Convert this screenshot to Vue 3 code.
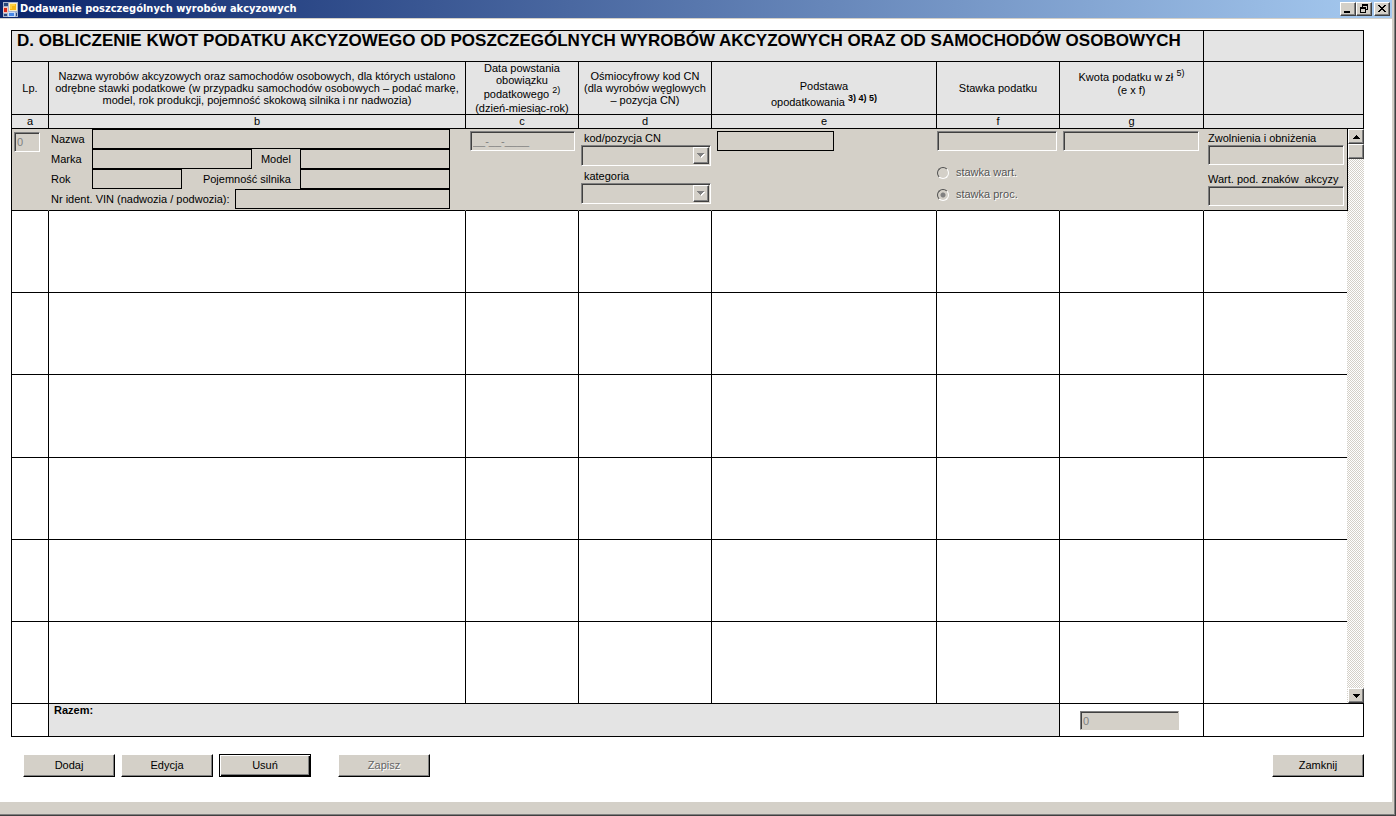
<script setup>
import { ref } from 'vue'

const letters = ['a', 'b', 'c', 'd', 'e', 'f', 'g']
const emptyRows = 6
const rateKind = ref('proc')
</script>

<template>
  <div class="window">
    <header class="titlebar">
      <svg class="app-icon" width="15" height="15" viewBox="0 0 15 15" shape-rendering="crispEdges" aria-hidden="true">
        <rect width="15" height="15" fill="#a8b4cc" />
        <path d="M1 1h4v3H1zM1 12h3v2H1zM13 11h1v3h-1z" fill="#28487c" />
        <rect x="6" y="1" width="8" height="8" fill="#fff0c0" />
        <rect x="7" y="2" width="6" height="6" fill="#f8b818" />
        <path d="M7 2h5v2H9v3H7z" fill="#ffd040" />
        <rect x="0" y="5" width="5" height="6" fill="#f0c8c0" />
        <rect x="1" y="6" width="3" height="4" fill="#d82818" />
        <rect x="5" y="10" width="7" height="5" fill="#c8dcf8" />
        <rect x="6" y="11" width="5" height="3" fill="#4888e8" />
      </svg>
      <h1 class="caption">Dodawanie poszczególnych wyrobów akcyzowych</h1>
      <div class="controls">
        <button class="ctl" aria-label="Minimalizuj">
          <svg width="12" height="10" viewBox="0 0 12 10" shape-rendering="crispEdges"><path d="M2 7h6v2H2z" /></svg>
        </button>
        <button class="ctl" aria-label="Przywróć">
          <svg width="12" height="10" viewBox="0 0 12 10" shape-rendering="crispEdges">
            <path d="M4 0h6v6H8V5h1V2H5v1H4zM2 3h6v6H2zM3 5v3h4V5z" fill-rule="evenodd" />
          </svg>
        </button>
        <button class="ctl close" aria-label="Zamknij okno">
          <svg width="12" height="10" viewBox="0 0 12 10" shape-rendering="crispEdges">
            <path d="M2 1h2v1h1v1h2V2h1V1h2v1H9v1H8v1H7v1h1v1h1v1h1v1H8V7H7V6H5v1H4v1H2V7h1V6h1V5h1V4H4V3H3V2H2z" />
          </svg>
        </button>
      </div>
    </header>

    <main class="client">
      <table class="sheet">
        <colgroup>
          <col class="w-a" /><col class="w-b" /><col class="w-c" /><col class="w-d" />
          <col class="w-e" /><col class="w-f" /><col class="w-g" /><col class="w-h" /><col class="w-s" />
        </colgroup>
        <thead>
          <tr class="section">
            <th colspan="7">D. OBLICZENIE KWOT PODATKU AKCYZOWEGO OD POSZCZEGÓLNYCH WYROBÓW AKCYZOWYCH ORAZ OD SAMOCHODÓW OSOBOWYCH</th>
            <th colspan="2" class="last"></th>
          </tr>
          <tr class="heads">
            <th>Lp.</th>
            <th>Nazwa wyrobów akcyzowych oraz samochodów osobowych, dla których ustalono<br />odrębne stawki podatkowe (w przypadku samochodów osobowych – podać markę,<br />model, rok produkcji, pojemność skokową silnika i nr nadwozia)</th>
            <th>Data powstania<br />obowiązku<br /><span class="tall">podatkowego <sup>2)</sup></span><br />(dzień-miesiąc-rok)</th>
            <th>Ośmiocyfrowy kod CN<br />(dla wyrobów węglowych<br />– pozycja CN)</th>
            <th class="base">Podstawa<br /><span class="tall">opodatkowania <sup>3) 4) 5)</sup></span></th>
            <th>Stawka podatku</th>
            <th class="amount">Kwota podatku w zł <sup>5)</sup><br />(e x f)</th>
            <th colspan="2" class="last"></th>
          </tr>
          <tr class="letters">
            <th v-for="l in letters" :key="l">{{ l }}</th>
            <th colspan="2" class="last"></th>
          </tr>
        </thead>
        <tbody>
          <tr class="edit">
            <td class="cell-a"><input class="sunken" value="0" disabled aria-label="Lp." /></td>
            <td class="cell-b">
              <div class="line">
                <label for="nazwa" class="short">Nazwa</label>
                <input id="nazwa" class="flat grow" disabled />
              </div>
              <div class="line">
                <label for="marka" class="short">Marka</label>
                <input id="marka" class="flat grow" disabled />
                <label for="model" class="mid">Model</label>
                <input id="model" class="flat wide" disabled />
              </div>
              <div class="line">
                <label for="rok" class="short">Rok</label>
                <input id="rok" class="flat year" disabled />
                <label for="poj" class="engine">Pojemność silnika</label>
                <input id="poj" class="flat wide" disabled />
              </div>
              <div class="line">
                <label for="vin" class="vin">Nr ident. VIN (nadwozia / podwozia):</label>
                <input id="vin" class="flat grow" disabled />
              </div>
            </td>
            <td class="cell-c"><input class="sunken" value="__-__-____" disabled aria-label="Data powstania obowiązku podatkowego" /></td>
            <td class="cell-d">
              <label for="kod">kod/pozycja CN</label>
              <div class="combo">
                <select id="kod" class="sunken" disabled><option></option></select>
                <span class="drop"><svg width="8" height="5" viewBox="0 0 8 5" shape-rendering="crispEdges"><path d="M1 1h7v1H7v1H6v1H5v1H4V4H3V3H2V2H1z" fill="#fff" /><path d="M0 0h7v1H6v1H5v1H4v1H3V3H2V2H1V1H0z" fill="#808080" /></svg></span>
              </div>
              <label for="kat" class="second">kategoria</label>
              <div class="combo">
                <select id="kat" class="sunken" disabled><option></option></select>
                <span class="drop"><svg width="8" height="5" viewBox="0 0 8 5" shape-rendering="crispEdges"><path d="M1 1h7v1H7v1H6v1H5v1H4V4H3V3H2V2H1z" fill="#fff" /><path d="M0 0h7v1H6v1H5v1H4v1H3V3H2V2H1V1H0z" fill="#808080" /></svg></span>
              </div>
            </td>
            <td class="cell-e"><input class="flat" disabled aria-label="Podstawa opodatkowania" /></td>
            <td class="cell-f">
              <input class="sunken" disabled aria-label="Stawka podatku" />
              <label class="radio"><input v-model="rateKind" type="radio" name="stawka" value="wart" disabled />stawka wart.</label>
              <label class="radio"><input v-model="rateKind" type="radio" name="stawka" value="proc" disabled />stawka proc.</label>
            </td>
            <td class="cell-g"><input class="sunken" disabled aria-label="Kwota podatku w zł" /></td>
            <td class="cell-h">
              <label for="zwol">Zwolnienia i obniżenia</label>
              <input id="zwol" class="sunken" disabled />
              <label for="znaki" class="second">Wart. pod. znaków&nbsp; akcyzy</label>
              <input id="znaki" class="sunken" disabled />
            </td>
            <td class="scroll-cell" :rowspan="emptyRows + 1">
              <div class="scrollbar">
                <button class="arrow" aria-label="W górę"><svg width="7" height="4" viewBox="0 0 7 4" shape-rendering="crispEdges"><path d="M3 0h1v1h1v1h1v1h1v1H0V3h1V2h1V1h1z" /></svg></button>
                <div class="thumb"></div>
                <button class="arrow down" aria-label="W dół"><svg width="7" height="4" viewBox="0 0 7 4" shape-rendering="crispEdges"><path d="M0 0h7v1H6v1H5v1H4v1H3V3H2V2H1V1H0z" /></svg></button>
              </div>
            </td>
          </tr>
          <tr v-for="n in emptyRows" :key="n" class="row">
            <td v-for="c in 8" :key="c"></td>
          </tr>
        </tbody>
        <tfoot>
          <tr class="total">
            <td></td>
            <th colspan="5" scope="row">Razem:</th>
            <td class="sum"><input class="sunken" value="0" disabled aria-label="Razem" /></td>
            <td colspan="2" class="last"></td>
          </tr>
        </tfoot>
      </table>

      <div class="actions">
        <button class="btn">Dodaj</button>
        <button class="btn">Edycja</button>
        <button class="btn default">Usuń</button>
        <button class="btn save" disabled>Zapisz</button>
        <button class="btn exit">Zamknij</button>
      </div>
    </main>
  </div>
</template>

<style>
body {
  margin: 0;
}
</style>

<style scoped>
* {
  box-sizing: border-box;
}
.window {
  min-height: 100vh;
  display: flex;
  flex-direction: column;
  padding: 0 4px 14px 0;
  background: #d4d0c8;
  box-shadow: inset -1px -1px #404040, inset -2px -2px #808080;
  font: 11px/13px "Liberation Sans", Arial, sans-serif;
  color: #000;
}
input,
select,
button {
  font: inherit;
  color: inherit;
  margin: 0;
  padding: 0;
  min-width: 0;
  border-radius: 0;
  appearance: none;
  background: #d4d0c8;
}

.titlebar {
  display: flex;
  align-items: center;
  height: 18px;
  padding: 0 2px 0 3px;
  margin-bottom: 1px;
  background: linear-gradient(90deg, #0a246a, #a6caf0);
}
.caption {
  flex: 1;
  margin: 0 0 0 2px;
  font: bold 11px/16px "DejaVu Sans Condensed", "DejaVu Sans", sans-serif;
  color: #fff;
  white-space: nowrap;
}
.controls {
  display: flex;
}
.ctl {
  display: flex;
  width: 16px;
  height: 14px;
  border: 1px solid;
  border-color: #fff #404040 #404040 #fff;
  box-shadow: inset -1px -1px #808080;
  padding: 1px;
}
.close {
  margin-left: 2px;
}

.client {
  flex: 1;
  background: #fff;
  padding: 11px 28px 24px 11px;
}
.sheet {
  width: 100%;
  table-layout: fixed;
  border-spacing: 0;
  border-top: 1px solid #000;
}
.w-a { width: 37px; }
.w-c { width: 113px; }
.w-d { width: 133px; }
.w-e { width: 225px; }
.w-f { width: 123px; }
.w-g { width: 144px; }
.w-h { width: 144px; }
.w-s { width: 17px; }
.sheet th,
.sheet td {
  padding: 0;
  border-left: 1px solid #000;
  border-bottom: 1px solid #000;
}
.sheet .last {
  border-right: 1px solid #000;
}
.sheet th {
  background: #e4e4e4;
  font-weight: normal;
  white-space: nowrap;
}
.sheet .section th {
  height: 31px;
  padding-left: 5px;
  vertical-align: top;
  text-align: left;
  font-size: 17px;
  line-height: 20px;
  font-weight: bold;
}
.sheet .heads th {
  height: 53px;
  line-height: 12px;
}
.sheet .letters th {
  height: 14px;
  line-height: 13px;
}
sup {
  font-size: 9px;
  line-height: 9px;
  vertical-align: 5px;
}
.base sup {
  font-weight: bold;
}
.tall {
  line-height: 16px;
}
.sheet .heads .amount {
  padding-top: 7px;
  vertical-align: top;
  line-height: 13px;
}
.sheet .heads .base {
  padding-top: 16px;
}
.base .tall {
  line-height: 20px;
}

.sheet .edit td {
  height: 82px;
  vertical-align: top;
  background: #d4d0c8;
  border-left-color: #d4d0c8;
}
.sheet .edit .cell-a {
  border-left-color: #000;
  padding: 3px 8px 0 2px;
}
.flat {
  height: 20px;
  border: 1px solid #000;
}
.sunken {
  height: 20px;
  border: 1px solid;
  border-color: #808080 #fff #fff #808080;
  box-shadow: inset 1px 1px #404040;
  padding: 0 2px;
  color: #808080;
}
.edit td > input {
  display: block;
  width: 100%;
}
.sheet .edit .cell-b {
  padding: 0 15px 0 2px;
}
.line {
  display: flex;
  align-items: center;
  white-space: nowrap;
}
.grow { flex: 1; }
.wide { width: 150px; }
.year { width: 90px; }
.short { width: 41px; }
.mid { width: 48px; padding-left: 9px; }
.engine { flex: 1; text-align: right; padding-right: 9px; }
.vin { width: 184px; }
.sheet .edit .cell-c { padding: 2px 3px 0 4px; }
.sheet .edit .cell-d { padding: 3px 0 0 2px; }
.cell-d label,
.cell-h > label {
  display: block;
  height: 13px;
  white-space: nowrap;
}
.cell-d label { padding-left: 3px; }
.combo {
  position: relative;
}
.combo select {
  display: block;
  width: 100%;
  height: 21px;
  opacity: 1;
}
.cell-d .second {
  margin-top: 4px;
}
.drop {
  position: absolute;
  top: 2px;
  right: 2px;
  bottom: 2px;
  width: 16px;
  display: flex;
  align-items: center;
  justify-content: center;
  border: 1px solid;
  border-color: #fff #404040 #404040 #fff;
  box-shadow: inset -1px -1px #808080;
}
.sheet .edit .cell-e { padding: 2px 102px 0 5px; }
.sheet .edit .cell-f { padding: 2px 2px 0 0; }
.radio {
  display: flex;
  align-items: center;
  gap: 7px;
  height: 13px;
  margin-top: 9px;
  color: #555;
  text-shadow: 1px 1px #fff;
}
.sunken + .radio {
  margin-top: 15px;
}
.radio input {
  width: 12px;
  height: 12px;
  border: 1px solid;
  border-color: #505050 #fff #fff #505050;
  border-radius: 50%;
}
.radio input:checked {
  background: radial-gradient(circle, #808080 2px, #d4d0c8 3px);
}
.sheet .edit .cell-g { padding: 2px 4px 0 3px; }
.sheet .edit .cell-h {
  position: relative;
  z-index: 1;
  padding: 3px 3px 0 4px;
  box-shadow: 1px 0 #000;
}
.cell-h .second {
  margin-top: 8px;
}
.sheet .edit .scroll-cell {
  height: 1px;
  border-left: 0;
}
.scrollbar {
  height: 100%;
  display: flex;
  flex-direction: column;
  padding-left: 1px;
  background: repeating-conic-gradient(#fff 0 25%, #d4d0c8 0 50%) 0 0 / 2px 2px;
}
.arrow,
.thumb {
  display: flex;
  align-items: center;
  justify-content: center;
  width: 100%;
  height: 15px;
  background: #d4d0c8;
  border: 1px solid;
  border-color: #fff #404040 #404040 #fff;
  box-shadow: inset -1px -1px #808080;
}
.down {
  margin-top: auto;
}
.row td {
  height: 82px;
  background: #fff;
}
.row:nth-child(4) td {
  height: 83px;
}
.total td {
  height: 33px;
  vertical-align: top;
}
.sheet .total th {
  padding-left: 5px;
  text-align: left;
  vertical-align: top;
  font-weight: bold;
}
.sheet .total .sum {
  padding: 7px 24px 0 20px;
}
.sum input {
  display: block;
  width: 100%;
  height: 19px;
  border-color: #808080 #d4d0c8 #d4d0c8 #808080;
}

.actions {
  display: flex;
  gap: 6px;
  padding: 17px 0 0 12px;
}
.btn {
  width: 92px;
  height: 23px;
  border: 1px solid;
  border-color: #fff #000 #000 #fff;
  box-shadow: inset -1px -1px #808080;
}
.default {
  border-color: #000;
  box-shadow: inset 1px 1px #fff, inset -1px -1px #000, inset -2px -2px #808080;
}
.save {
  margin-left: 21px;
  color: #666;
  text-shadow: 1px 1px #fff;
}
.exit {
  margin-left: auto;
}
</style>
